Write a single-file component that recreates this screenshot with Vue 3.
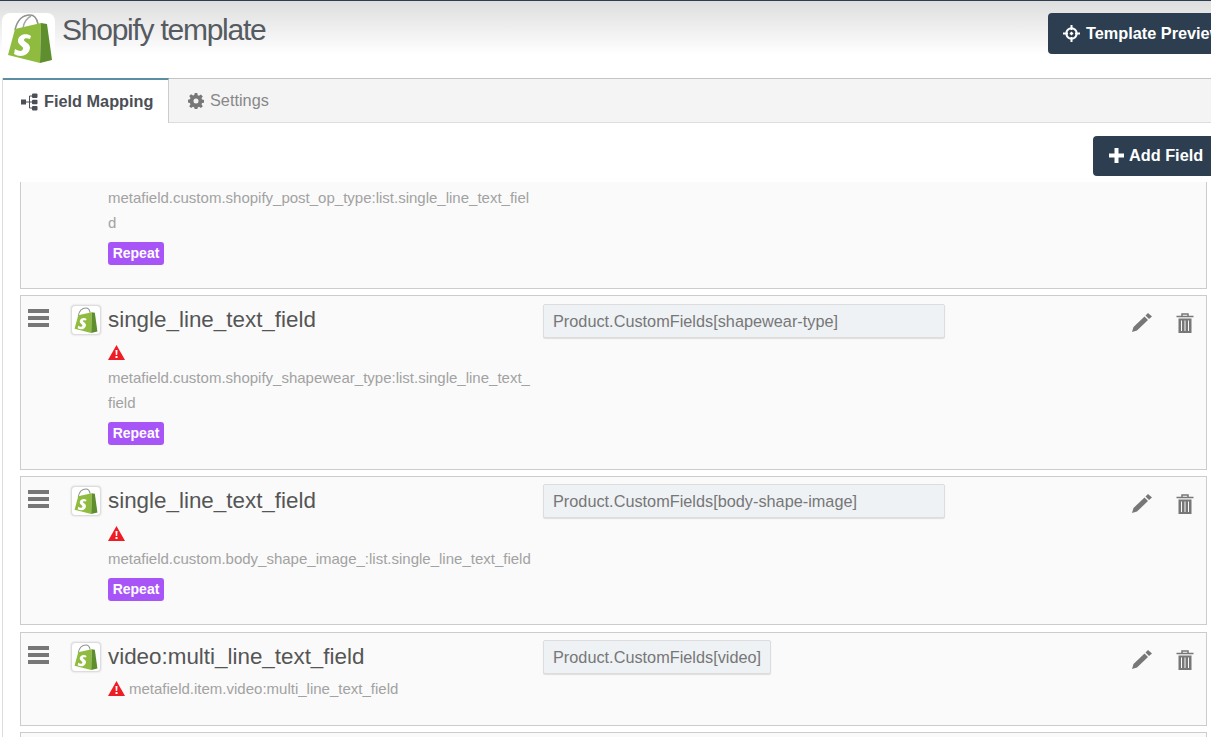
<script setup>
const bag = {
  handleA: 'M8 17 C10 8 15 2 23 2 C28 2 30 6 31 11',
  handleB: 'M16 15 C17 9 20 5 24 3',
  body: 'M1 42 L8 16 L34 10 L33 50 Z',
  side: 'M34 10 L40 11 L45 47 L33 50 Z',
  s: 'M24 23 C20 20 12 21 11 27 C10 32 17 33 16 36 C15 39 11 38 8 36 L7 41 C13 45 22 43 23 35 C23 30 17 29 17 27 C17 25 20 25 23 26 Z',
}
const cards = [
  { name: 'single_line_text_field', tag: 'Product.CustomFields[shapewear-type]', meta: 'metafield.custom.shopify_shapewear_type:list.single_line_text_field', repeat: true, wide: true, h: 175 },
  { name: 'single_line_text_field', tag: 'Product.CustomFields[body-shape-image]', meta: 'metafield.custom.body_shape_image_:list.single_line_text_field', repeat: true, wide: true, tight: true, h: 149 },
  { name: 'video:multi_line_text_field', tag: 'Product.CustomFields[video]', meta: 'metafield.item.video:multi_line_text_field', inline: true, lower: true, tight: true, h: 94 },
]
</script>

<template>
  <div class="page">
    <header class="head">
      <div class="logo">
        <svg width="48" height="52" viewBox="0 0 48 52">
          <path :d="bag.handleA" fill="none" stroke="#8f9490" stroke-width="1.6"/>
          <path :d="bag.handleB" fill="none" stroke="#a5a9a6" stroke-width="1.4"/>
          <path :d="bag.body" fill="#8fbc3f"/>
          <path :d="bag.side" fill="#5e8e2e"/>
          <path :d="bag.s" fill="#fff"/>
        </svg>
      </div>
      <h1 class="title">Shopify template</h1>
      <button class="dark preview">
        <svg width="17" height="17" viewBox="0 0 17 17"><circle cx="8.500" cy="8.500" r="5.200" fill="none" stroke="#fff" stroke-width="2"/><path d="M8.500 0v5M8.500 12v5M0 8.500h5M12 8.500h5" stroke="#fff" stroke-width="2"/><path d="M8.500 6.500l2 2-2 2-2-2z" fill="#fff"/></svg>
        Template Preview
      </button>
    </header>

    <div class="panel">
      <nav class="tabs">
        <div class="tab active">
          <svg width="17" height="18" viewBox="0 0 17 18"><rect x="0" y="6.500" width="5" height="5" fill="#4b4f56"/><path d="M5 9h4M8.500 3v12M8.500 3h3M8.500 15h3M8.500 9h3" stroke="#4b4f56" stroke-width="1" fill="none"/><rect x="11" y="0.500" width="5.500" height="4.500" rx="1" fill="#4b4f56"/><rect x="11" y="6.800" width="5.500" height="4.500" rx="1" fill="#4b4f56"/><rect x="11" y="13" width="5.500" height="4.500" rx="1" fill="#4b4f56"/></svg>
          Field Mapping
        </div>
        <div class="tab other">
          <svg width="16" height="16" viewBox="0 0 16 16"><path d="M6.700 0h2.600l.4 2.200 1.300.6 1.900-1.300 1.900 1.900-1.300 1.900.6 1.300 2.200.4v2.600l-2.200.4-.6 1.300 1.300 1.900-1.900 1.900-1.900-1.300-1.300.6-.4 2.200H6.700l-.4-2.200-1.300-.6-1.900 1.300-1.900-1.900 1.300-1.900-.6-1.300L-.3 9.300V6.700l2.200-.4.600-1.300-1.300-1.900 1.900-1.900 1.900 1.300 1.300-.6z" fill="#777"/><circle cx="8" cy="8" r="2.500" fill="#f4f4f4"/></svg>
          Settings
        </div>
      </nav>
      <div class="actions">
        <button class="dark add">
          <svg width="15" height="15" viewBox="0 0 15 15"><path d="M7.500 0v15M0 7.500h15" stroke="#fff" stroke-width="4"/></svg>
          Add Field
        </button>
      </div>
      <div class="list">
        <div class="card first">
          <div class="meta wrapped">metafield.custom.shopify_post_op_type:list.single_line_text_field</div>
          <span class="badge">Repeat</span>
        </div>
        <div v-for="c in cards" :key="c.tag" class="card row" :class="{ lower: c.lower }" :style="{ height: c.h + 'px' }">
          <div class="bars"><i></i><i></i><i></i></div>
          <div class="thumb">
            <svg width="24" height="27" viewBox="0 0 46 52">
              <path :d="bag.handleA" fill="none" stroke="#8f9490" stroke-width="2"/>
              <path :d="bag.body" fill="#8fbc3f"/>
              <path :d="bag.side" fill="#5e8e2e"/>
              <path :d="bag.s" fill="#fff"/>
            </svg>
          </div>
          <div class="info">
            <div class="name">{{ c.name }}</div>
            <div v-if="c.inline" class="meta inline"><svg class="warn" width="17" height="15" viewBox="0 0 17 15"><path d="M8.500 0 L17 15 H0 Z" fill="#ee1c25"/><path d="M7.500 5h2l-.3 5h-1.400zM7.500 11h2v2h-2z" fill="#fff"/></svg>{{ c.meta }}</div>
            <template v-else>
              <svg class="warn block" width="17" height="15" viewBox="0 0 17 15"><path d="M8.500 0 L17 15 H0 Z" fill="#ee1c25"/><path d="M7.500 5h2l-.3 5h-1.400zM7.500 11h2v2h-2z" fill="#fff"/></svg>
              <div class="meta wrapped">{{ c.meta }}</div>
            </template>
            <span v-if="c.repeat" class="badge">Repeat</span>
          </div>
          <div class="target" :class="{ tight: c.tight }"><span class="tag" :class="{ wide: c.wide }">{{ c.tag }}</span></div>
          <div class="tools">
            <svg width="20" height="19" viewBox="0 0 20 19"><path d="M0 19 L1.500 14 L12.500 3.500 L16 7 L5 17.500 Z" fill="#777"/><path d="M13.500 2.500 L16 0 L20 3.500 L17 6 Z" fill="#777"/></svg>
            <svg width="18" height="20" viewBox="0 0 18 20"><path d="M0.500 3.500h17M6 3V1h6v2" stroke="#777" stroke-width="1.500" fill="none"/><path d="M2.500 5.500h13V20h-13z" fill="#777"/><path d="M5.500 7.500v10.500M9 7.500v10.500M12.500 7.500v10.500" stroke="#fafafa" stroke-width="1"/></svg>
          </div>
        </div>
        <div class="card last"></div>
      </div>
    </div>
  </div>
</template>

<style>
html, body { margin: 0; overflow: hidden; }
</style>

<style scoped>
.page { width: 1211px; height: 737px; overflow: hidden; display: flex; flex-direction: column; font-family: "Liberation Sans", Arial, sans-serif; background: #fff; color: #555; border-top: 1px solid #2c3e50; box-sizing: border-box; }
.head { height: 77px; flex: none; display: flex; align-items: flex-start; background: linear-gradient(#dedede, #fff 70%); padding-left: 2px; overflow: hidden; box-sizing: border-box; position: relative; }
.logo { width: 53px; height: 52px; margin-top: 12px; padding-left: 5px; box-sizing: border-box; border-radius: 8px; background: linear-gradient(#fff, #fff 50%, rgba(255,255,255,0)); flex: none; }
.title { margin: 12px 0 0 7px; font-size: 30px; font-weight: 400; line-height: 34px; letter-spacing: -1.25px; color: #555b60; }
.dark { background: #2c3e50; color: #fff; border: none; border-radius: 4px 0 0 4px; font: 700 16.3px "Liberation Sans", Arial, sans-serif; display: flex; align-items: center; white-space: nowrap; }
.preview { position: absolute; left: 1048px; top: 12px; height: 41px; padding: 0 0 0 15px; gap: 6px; width: 175px; }
.panel { flex: 1; min-height: 0; margin-left: 2px; border-left: 1px solid #ddd; display: flex; flex-direction: column; }
.tabs { height: 45px; flex: none; box-sizing: border-box; display: flex; background: #f4f4f4; border-top: 1px solid #c4c4c4; border-bottom: 1px solid #ddd; }
.tab { display: flex; align-items: center; gap: 6px; font-size: 16.3px; color: #888; }
.tab.other { padding-left: 19px; }
.tab.active { color: #4b4f56; font-weight: 700; background: #fff; border-top: 2px solid #5b8ea3; border-right: 1px solid #ccc; margin: -1px 0; padding-left: 18px; width: 166px; box-sizing: border-box; }
.actions { height: 59px; flex: none; display: flex; justify-content: flex-end; padding-top: 13px; box-sizing: border-box; }
.add { height: 40px; width: 118px; padding: 0 0 2px 16px; gap: 5px; }
.list { flex: 1; min-height: 0; overflow: hidden; background: #fff; padding: 0 4px 0 17px; display: flex; flex-direction: column; gap: 6px; }
.card { flex: none; box-sizing: border-box; background: #fafafa; border: 1px solid #ccc; }
.first { height: 107px; border-top: none; padding: 3px 0 0 87px; }
.row { display: flex; }
.row.lower { margin-top: 1px; }
.bars { width: 21px; margin: 13px 0 0 7px; display: flex; flex-direction: column; gap: 3px; flex: none; }
.bars i { display: block; height: 4px; background: #777; }
.thumb { width: 30px; height: 30px; margin: 9px 0 0 22px; background: #fff; border: 1px solid #ddd; border-radius: 4px; box-sizing: border-box; display: flex; align-items: center; justify-content: center; flex: none; box-shadow: 0 0 2px #ccc; }
.info { width: 435px; margin-left: 7px; flex: none; }
.name { font-size: 22.4px; line-height: 26px; margin-top: 11px; color: #555; }
.meta { font-size: 15px; line-height: 25px; color: #a2a2a2; }
.wrapped { width: 423px; word-break: break-all; overflow-wrap: anywhere; }
.warn { display: inline-block; vertical-align: -2px; margin-right: 4px; }
.warn.block { display: block; margin-top: 12px; margin-bottom: 5px; }
.meta.inline { margin-top: 6px; }
.badge { display: block; width: 56px; height: 23px; margin-top: 7px; border-radius: 3px; background: #a855f7; color: #fff; font-weight: 700; font-size: 14px; line-height: 23px; text-align: center; }
.target { flex: none; margin-top: 8px; width: 589px; }
.target.tight { margin-top: 7px; }
.tag { display: inline-block; background: #eef2f5; border: 1px solid #ddd; border-radius: 2px; padding: 0 9px; height: 34px; line-height: 32px; font-size: 16.3px; color: #777; box-sizing: border-box; box-shadow: 0 1px 1px #ddd; }
.tag.wide { width: 402px; }
.tools { display: flex; gap: 24px; margin-top: 17px; align-items: flex-start; }
.last { height: 40px; flex: none; }
</style>
